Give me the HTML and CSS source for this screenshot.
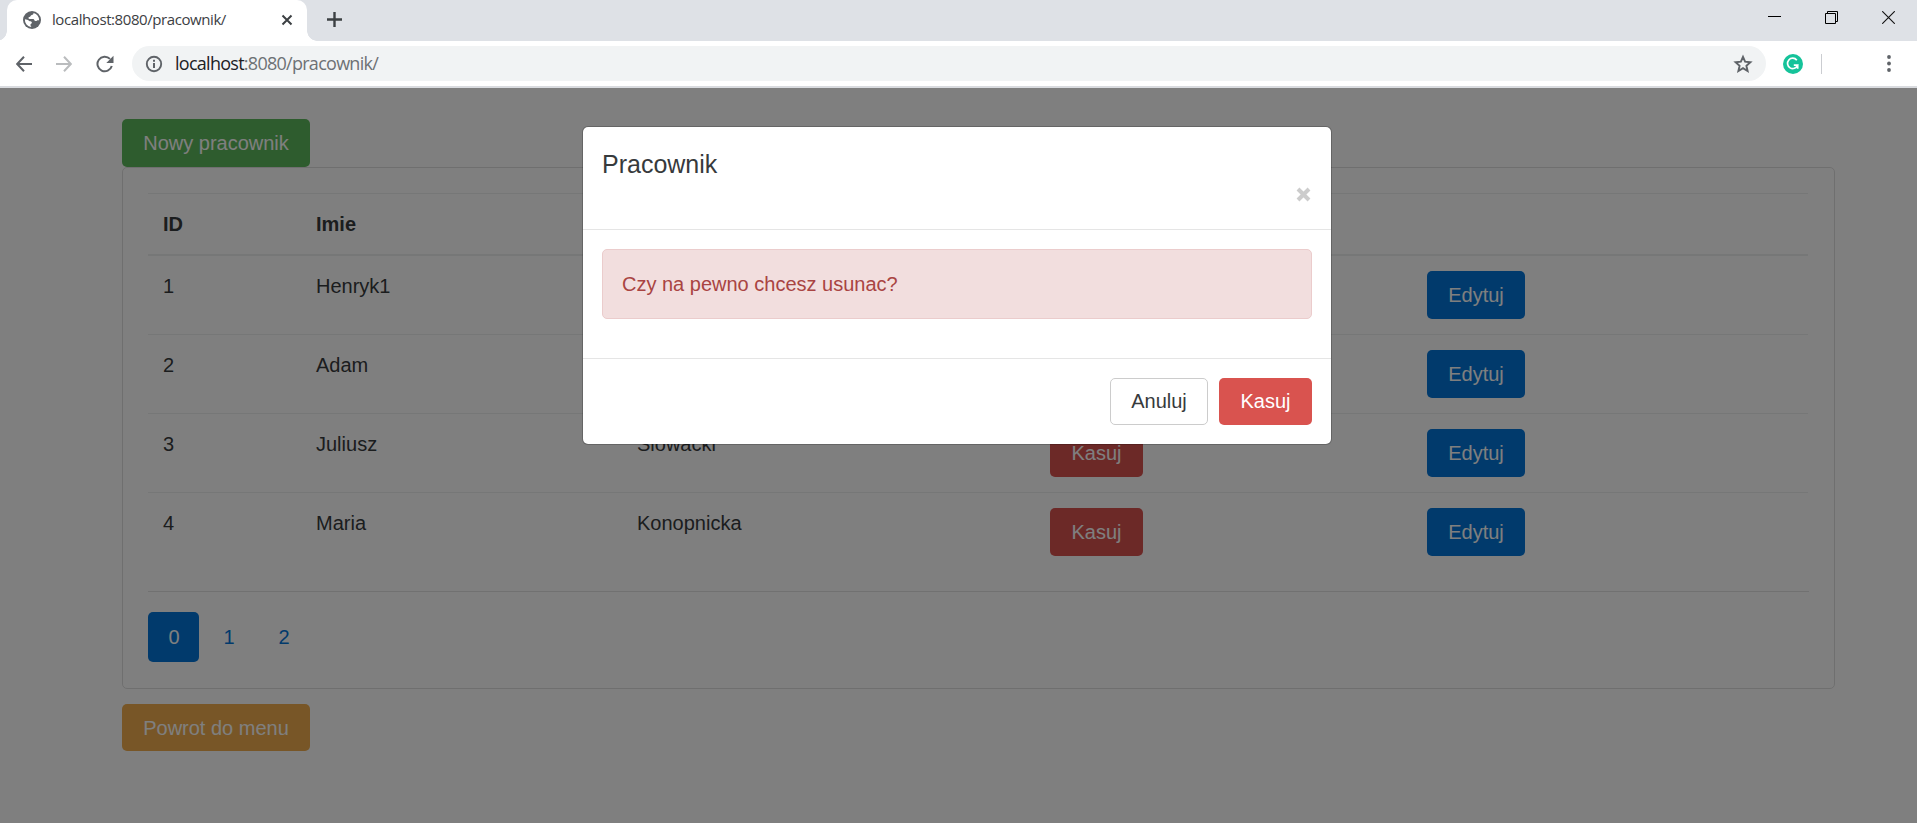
FILE: index.html
```html
<!DOCTYPE html>
<html lang="pl">
<head>
<meta charset="utf-8">
<title>localhost:8080/pracownik/</title>
<link rel="stylesheet" href="styles.css">
</head>
<body>
<header class="browser">
  <div class="tabstrip">
    <div class="tab">
      <svg class="globe" width="18" height="18" viewBox="0 0 18 18"><circle cx="9" cy="9" r="9" fill="#5f6368"/><path d="M10.600 1.900C10.500 3.300 9.800 3.700 8.700 3.900 7.300 4.100 7.900 5.900 6.200 6.100 4.900 6.300 5.300 8 6.600 8h3.600c1.200 0 1 1.900 2.200 2 1.500.1 1.700-1.200 3.700-.6a7.200 7.200 0 0 0-5.500-7.500zM1.900 8.300c1.500.2 3 .5 4 1.400.8.8 2.900.2 3 1.800.1 1.300-1.600 1.200-1.500 2.600.1.900.9 1 .9 2A7.200 7.200 0 0 1 1.900 8.300z" fill="#fff"/></svg>
      <span class="tab-title">localhost:8080/pracownik/</span>
      <svg class="tab-close" width="12" height="12" viewBox="0 0 12 12"><path d="M1.500 1.500l9 9M10.500 1.500l-9 9" stroke="#3c4043" stroke-width="2"/></svg>
    </div>
    <svg class="new-tab" width="15" height="15" viewBox="0 0 15 15"><path d="M7.500 0v15M0 7.500h15" stroke="#3c4043" stroke-width="2.400"/></svg>
    <div class="window-controls">
      <svg width="13" height="13" viewBox="0 0 13 13"><path d="M0 5.500h13" stroke="#000"/></svg>
      <svg width="13" height="13" viewBox="0 0 13 13"><path d="M.5 2.500h10v10H.5zM2.500 2.500v-2h10v10h-2" fill="none" stroke="#000"/></svg>
      <svg width="13" height="13" viewBox="0 0 13 13"><path d="M.2.2l12.600 12.600M12.800.2L.2 12.800" stroke="#111" stroke-width="1.100"/></svg>
    </div>
  </div>
  <div class="toolbar">
    <svg class="nav-icon" width="16" height="16" viewBox="0 0 16 16"><path d="M16 8H1.500M8 .8L1.200 8 8 15.200" fill="none" stroke="#5f6368" stroke-width="2"/></svg>
    <svg class="nav-icon" width="16" height="16" viewBox="0 0 16 16"><path d="M0 8h14.500M8 .8L14.800 8 8 15.200" fill="none" stroke="#babcbe" stroke-width="2"/></svg>
    <svg class="nav-icon" width="18" height="18" viewBox="0 0 18 18"><path d="M15.800 11A7.300 7.300 0 1 1 14 3.900" fill="none" stroke="#5f6368" stroke-width="2"/><path d="M17.500.8v7.200h-7.200z" fill="#5f6368"/></svg>
    <div class="omnibox">
      <svg width="18" height="18" viewBox="0 0 18 18"><circle cx="9" cy="9" r="7.200" fill="none" stroke="#5f6368" stroke-width="1.900"/><path d="M9 8v5M9 4.800v1.900" stroke="#5f6368" stroke-width="2"/></svg>
      <span class="url"><b>localhost</b>:8080/pracownik/</span>
      <svg class="star" width="20" height="20" viewBox="0 0 20 20"><path d="M10 2.800l2.100 4.900 5.300.5-4 3.600 1.200 5.200-4.600-2.800L5.400 17l1.200-5.200-4-3.600 5.300-.5z" fill="none" stroke="#5f6368" stroke-width="1.900"/></svg>
    </div>
    <svg class="extension" width="20" height="20" viewBox="0 0 20 20"><circle cx="10" cy="10" r="10" fill="#15c39a"/><path d="M13.800 6.200A5.200 5.200 0 1 0 14.600 11.200H10.800M14.700 14.800V11.200" fill="none" stroke="#fff" stroke-width="1.700"/></svg>
    <span class="divider"></span>
    <svg class="menu" width="4" height="17" viewBox="0 0 4 17"><circle cx="2" cy="2" r="1.900" fill="#5f6368"/><circle cx="2" cy="8.500" r="1.900" fill="#5f6368"/><circle cx="2" cy="15" r="1.900" fill="#5f6368"/></svg>
  </div>
</header>
<div class="viewport">
  <main class="container">
    <button class="btn btn-success">Nowy pracownik</button>
    <section class="card">
      <table class="table">
        <colgroup><col class="col-id"><col class="col-first"><col class="col-last"><col class="col-delete"><col class="col-edit"></colgroup>
        <thead><tr><th>ID</th><th>Imie</th><th></th><th></th><th></th></tr></thead>
        <tbody>
          <tr><td>1</td><td>Henryk1</td><td></td><td></td><td><button class="btn btn-primary">Edytuj</button></td></tr>
          <tr><td>2</td><td>Adam</td><td></td><td></td><td><button class="btn btn-primary">Edytuj</button></td></tr>
          <tr><td>3</td><td>Juliusz</td><td>Slowacki</td><td><button class="btn btn-danger">Kasuj</button></td><td><button class="btn btn-primary">Edytuj</button></td></tr>
          <tr><td>4</td><td>Maria</td><td>Konopnicka</td><td><button class="btn btn-danger">Kasuj</button></td><td><button class="btn btn-primary">Edytuj</button></td></tr>
        </tbody>
      </table>
      <hr class="rule">
      <nav class="pills"><a class="pill active">0</a><a class="pill">1</a><a class="pill">2</a></nav>
    </section>
    <button class="btn btn-warning">Powrot do menu</button>
  </main>
  <div class="backdrop">
    <div class="modal">
      <div class="modal-header">
        <h4 class="modal-title">Pracownik</h4>
        <svg class="close" width="15" height="15" viewBox="0 0 15 15"><path d="M2 2l11 11M13 2L2 13" stroke="#ccc" stroke-width="4"/></svg>
      </div>
      <div class="modal-body"><div class="alert">Czy na pewno chcesz usunac?</div></div>
      <div class="modal-footer">
        <button class="btn btn-secondary">Anuluj</button>
        <button class="btn btn-danger">Kasuj</button>
      </div>
    </div>
  </div>
</div>
</body>
</html>
```
FILE: styles.css
```css
* { box-sizing: border-box; }
body {
  margin: 0;
  height: 823px;
  display: flex;
  flex-direction: column;
  overflow: hidden;
  background: #fff;
  color: #373a3c;
  font: 20px/30px "Liberation Sans", Arial, sans-serif;
}
svg { display: block; flex: none; }

.browser { height: 88px; flex: none; border-bottom: 2px solid #d9dbdf; font-family: "Open Sans", "Noto Sans", sans-serif; }
.tabstrip { height: 41px; display: flex; background: #dee1e6; padding-left: 7px; }
.tab { position: relative; width: 300px; display: flex; align-items: center; padding: 0 14px 1px 16px; background: #fff; border-radius: 10px 10px 0 0; }
.tab::before, .tab::after { content: ""; position: absolute; bottom: 0; width: 10px; height: 10px; }
.tab::before { left: -10px; background: radial-gradient(circle at 0 0, transparent 9.5px, #fff 10px); }
.tab::after { right: -10px; background: radial-gradient(circle at 100% 0, transparent 9.5px, #fff 10px); }
.tab-title { margin: -3px 0 0 11px; font-size: 15px; letter-spacing: -0.42px; color: #3c4043; white-space: nowrap; }
.tab-close { margin-left: auto; }
.new-tab { margin: 12px 0 0 20px; }
.window-controls { display: flex; gap: 44px; margin: 11px 22px 0 auto; }
.toolbar { height: 45px; display: flex; align-items: center; padding: 0 26px 0 16px; background: #fff; }
.nav-icon { margin-right: 24px; }
.nav-icon:nth-child(3) { margin-right: 18px; }
.omnibox { width: 1634px; height: 35px; display: flex; align-items: center; padding: 0 13px 0 13px; border-radius: 18px; background: #f1f3f4; }
.url { margin: -1px 0 0 12px; font-size: 18px; letter-spacing: -0.73px; color: #6d7175; white-space: nowrap; }
.url b { font-weight: 400; color: #202124; }
.star { margin-left: auto; }
.extension { margin-left: 17px; }
.divider { width: 1px; height: 20px; margin-left: 18px; background: #cbcdd1; }
.menu { margin-left: auto; }

.viewport { position: relative; flex: 1; }
.container { width: 1713px; margin-left: 122px; padding-top: 31px; display: flex; flex-direction: column; align-items: flex-start; }
.btn { display: block; height: 48px; padding: 0; border: 1px solid transparent; border-radius: 5px; font: inherit; line-height: 46px; color: #fff; white-space: nowrap; }
.btn-success { width: 188px; background: #5cb85c; }
.btn-primary { width: 98px; background: #0275d8; }
.btn-danger { width: 93px; background: #d9534f; }
.btn-warning { width: 188px; height: 47px; margin-top: 15px; line-height: 44px; background: #f0ad4e; }
.btn-secondary { width: 98px; background: #fff; border-color: #ccc; color: #373a3c; }

.card { width: 1713px; height: 522px; padding: 25px; border: 1px solid #dfdfdf; border-radius: 5px; }
.table { width: 1660px; table-layout: fixed; border-collapse: separate; border-spacing: 0; }
.col-id { width: 153px; }
.col-first { width: 321px; }
.col-last { width: 413px; }
.col-delete { width: 377px; }
.col-edit { width: 396px; }
th, td { padding: 15px; text-align: left; vertical-align: top; }
th { height: 62px; border-top: 1px solid #eceeef; border-bottom: 1px solid #eceeef; }
td { height: 79px; border-top: 1px solid #eceeef; }
.rule { height: 1px; margin: 20px 0; border: 0; background: #e3e3e3; }
.pills { display: flex; gap: 4px; }
.pill { width: 51px; height: 50px; padding: 10px 0 0 1px; border-radius: 5px; text-align: center; color: #0275d8; }
.pill.active { background: #0275d8; color: #fff; }

.backdrop { position: absolute; inset: 0; background: rgba(0, 0, 0, 0.5); }
.modal { width: 750px; margin: 38px 0 0 582px; border: 1px solid rgba(0, 0, 0, 0.2); border-radius: 6px; background: #fff; background-clip: padding-box; }
.modal-header { height: 103px; padding: 19px; border-bottom: 1px solid #e5e5e5; }
.modal-title { margin: 0; font-size: 25px; font-weight: 400; line-height: 37px; }
.close { margin: 4px 1px 0 auto; }
.modal-body { height: 128px; padding: 19px; }
.alert { height: 70px; padding: 19px; border: 1px solid #ebcccc; border-radius: 5px; background: #f2dede; color: #a94442; }
.modal-footer { height: 86px; padding: 19px; border-top: 1px solid #e5e5e5; display: flex; justify-content: flex-end; gap: 11px; }
.modal-footer .btn { height: 47px; line-height: 45px; }
```
